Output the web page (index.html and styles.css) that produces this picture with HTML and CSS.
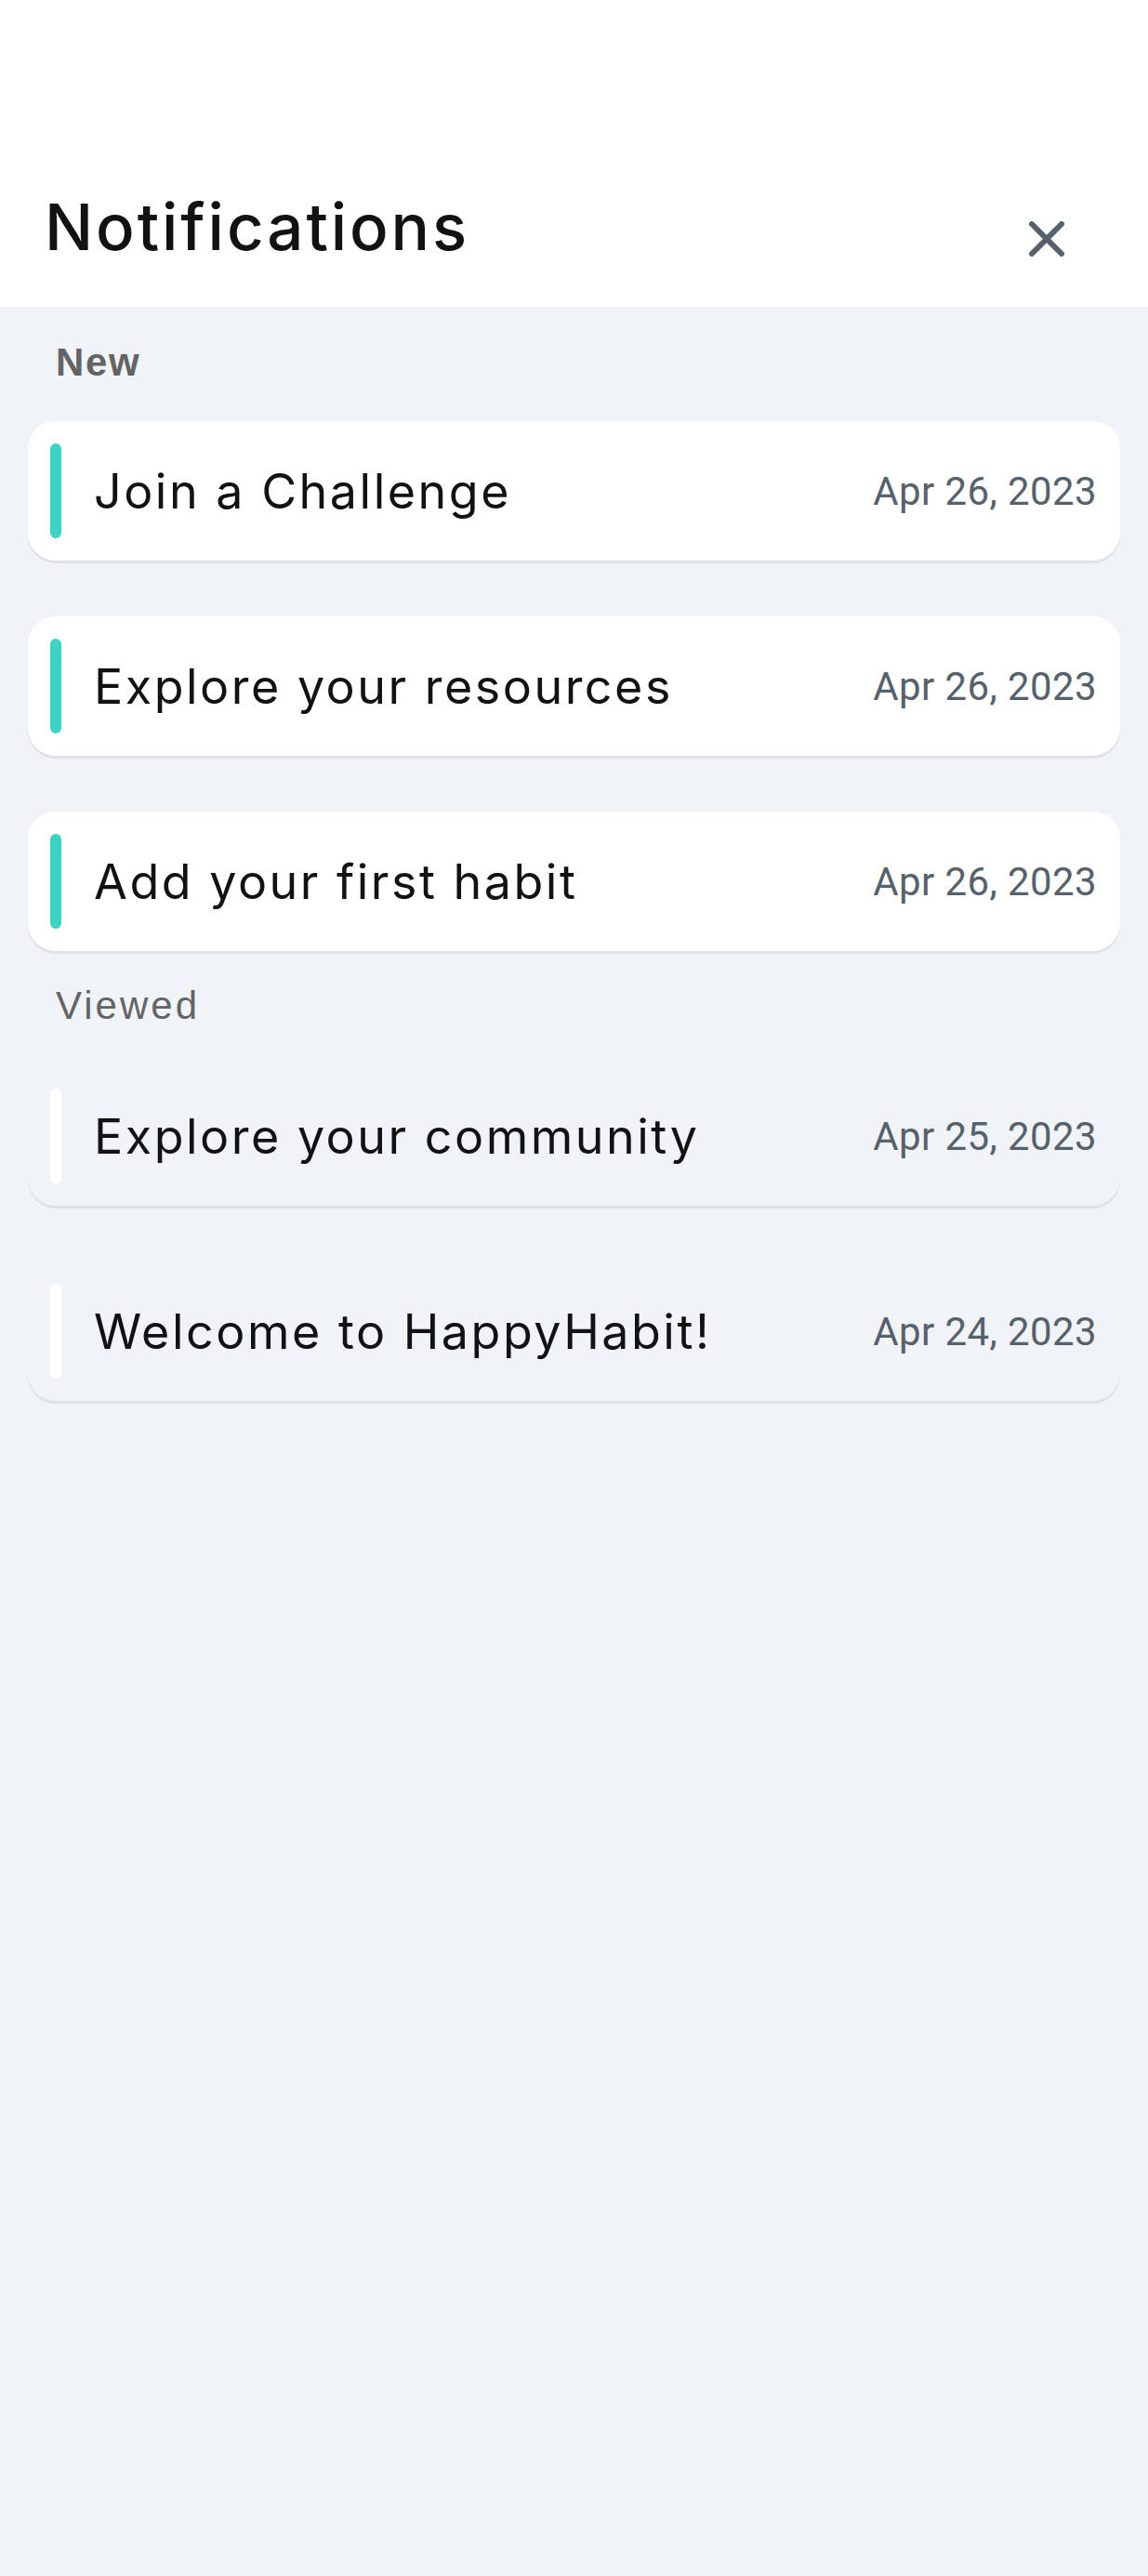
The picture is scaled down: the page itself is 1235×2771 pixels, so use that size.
FILE: index.html
```html
<!DOCTYPE html>
<html lang="en">
<head>
<meta charset="utf-8">
<title>Notifications</title>
<link rel="stylesheet" href="styles.css">
</head>
<body>
  <header class="header">
    <h1 class="title">Notifications</h1>
    <button class="close" aria-label="Close">
      <svg width="38" height="38" viewBox="0 0 38 38"><path d="M3 3L35 35M35 3L3 35" stroke="#56616b" stroke-width="6" stroke-linecap="round" fill="none"/></svg>
    </button>
  </header>
  <main class="list">
    <div class="label label-new">New</div>
    <div class="card unread"><span class="bar"></span><span class="name">Join a Challenge</span><span class="date">Apr 26, 2023</span></div>
    <div class="card unread"><span class="bar"></span><span class="name">Explore your resources</span><span class="date">Apr 26, 2023</span></div>
    <div class="card unread"><span class="bar"></span><span class="name">Add your first habit</span><span class="date">Apr 26, 2023</span></div>
    <div class="label label-viewed">Viewed</div>
    <div class="card read"><span class="bar"></span><span class="name">Explore your community</span><span class="date">Apr 25, 2023</span></div>
    <div class="card read"><span class="bar"></span><span class="name">Welcome to HappyHabit!</span><span class="date">Apr 24, 2023</span></div>
  </main>
</body>
</html>
```
FILE: styles.css
```css
* { box-sizing: border-box; }
html, body {
  margin: 0;
  padding: 0;
}
body {
  background: #f0f3f8;
  min-height: 2771px;
  font-family: "Inter", "Open Sans", sans-serif;
}
.header {
  background: #ffffff;
  height: 330px;
  display: flex;
  justify-content: space-between;
  align-items: flex-start;
  padding: 210px 90px 0 48px;
}
.title {
  margin: 0;
  font-size: 69px;
  line-height: 69px;
  font-weight: 500;
  color: #121212;
  letter-spacing: 2.9px;
}
.close {
  margin-top: 28px;
  width: 38px;
  height: 38px;
  padding: 0;
  border: 0;
  background: none;
  display: block;
}
.close svg { display: block; }
.list {
  padding: 0 30px;
  display: flex;
  flex-direction: column;
}
.label {
  font-family: "Liberation Sans", Arial, sans-serif;
  font-size: 42px;
  line-height: 42px;
  color: #646464;
  padding-left: 30px;
}
.label-new {
  font-weight: 700;
  letter-spacing: 1.6px;
  margin-top: 39px;
  margin-bottom: 42px;
}
.label-viewed {
  font-weight: 400;
  letter-spacing: 3px;
  margin-top: -22px;
  margin-bottom: 44px;
}
.card {
  height: 150px;
  border-radius: 30px;
  display: flex;
  align-items: center;
  padding: 24px 25px 24px 24px;
  margin-bottom: 60px;
  box-shadow: 0 3px 1px rgba(40, 50, 70, 0.09);
}
.card.unread { background: #ffffff; }
.card.read { background: #f0f3f8; }
.bar {
  width: 12px;
  align-self: stretch;
  border-radius: 6px;
  flex: none;
}
.unread .bar { background: #3ad4c2; }
.read .bar { background: #ffffff; }
.name {
  flex: 1;
  margin-left: 35px;
  font-size: 52px;
  font-weight: 400;
  letter-spacing: 2.5px;
  color: #121212;
  white-space: nowrap;
}
.date {
  font-family: "Roboto", sans-serif;
  font-size: 42px;
  letter-spacing: 0.4px;
  color: #56616b;
  white-space: nowrap;
}
```
